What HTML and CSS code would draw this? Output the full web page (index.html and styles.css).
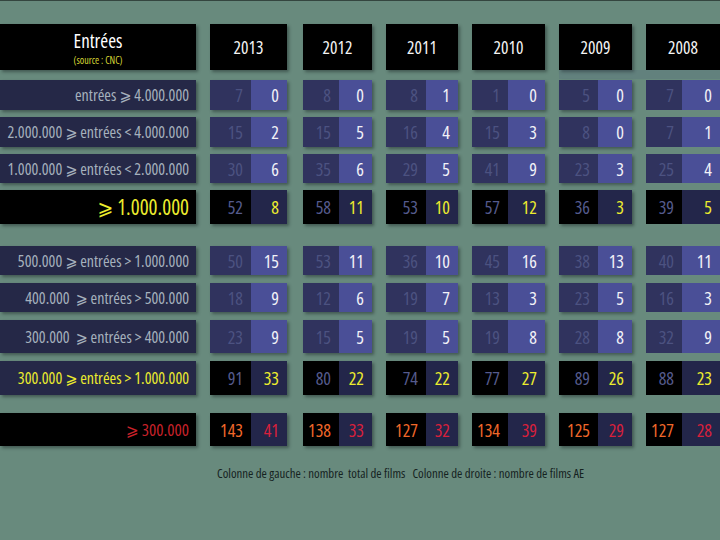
FILE: index.html
```html
<!DOCTYPE html>
<html lang="fr">
<head>
<meta charset="utf-8">
<title>Entrées</title>
<link rel="stylesheet" href="styles.css">
</head>
<body>
<div class="table">
  <div class="row head">
    <div class="label hlabel"><div class="ht">Entrées</div><div class="src">(source : CNC)</div></div>
    <div class="year y13">2013</div>
    <div class="year y12">2012</div>
    <div class="year y11">2011</div>
    <div class="year y10">2010</div>
    <div class="year y09">2009</div>
    <div class="year y08">2008</div>
  </div>

  <div class="row r1 norm">
    <div class="label">entrées ⩾ 4.000.000</div>
    <div class="cell y13"><span class="l">7</span><span class="r">0</span></div>
    <div class="cell y12"><span class="l">8</span><span class="r">0</span></div>
    <div class="cell y11"><span class="l">8</span><span class="r">1</span></div>
    <div class="cell y10"><span class="l">1</span><span class="r">0</span></div>
    <div class="cell y09"><span class="l">5</span><span class="r">0</span></div>
    <div class="cell y08"><span class="l">7</span><span class="r">0</span></div>
  </div>

  <div class="row r2 norm">
    <div class="label">2.000.000 ⩾ entrées &lt; 4.000.000</div>
    <div class="cell y13"><span class="l">15</span><span class="r">2</span></div>
    <div class="cell y12"><span class="l">15</span><span class="r">5</span></div>
    <div class="cell y11"><span class="l">16</span><span class="r">4</span></div>
    <div class="cell y10"><span class="l">15</span><span class="r">3</span></div>
    <div class="cell y09"><span class="l">8</span><span class="r">0</span></div>
    <div class="cell y08"><span class="l">7</span><span class="r">1</span></div>
  </div>

  <div class="row r3 norm">
    <div class="label">1.000.000 ⩾ entrées &lt; 2.000.000</div>
    <div class="cell y13"><span class="l">30</span><span class="r">6</span></div>
    <div class="cell y12"><span class="l">35</span><span class="r">6</span></div>
    <div class="cell y11"><span class="l">29</span><span class="r">5</span></div>
    <div class="cell y10"><span class="l">41</span><span class="r">9</span></div>
    <div class="cell y09"><span class="l">23</span><span class="r">3</span></div>
    <div class="cell y08"><span class="l">25</span><span class="r">4</span></div>
  </div>

  <div class="row r4 sum big">
    <div class="label">⩾ 1.000.000</div>
    <div class="cell y13"><span class="l">52</span><span class="r">8</span></div>
    <div class="cell y12"><span class="l">58</span><span class="r">11</span></div>
    <div class="cell y11"><span class="l">53</span><span class="r">10</span></div>
    <div class="cell y10"><span class="l">57</span><span class="r">12</span></div>
    <div class="cell y09"><span class="l">36</span><span class="r">3</span></div>
    <div class="cell y08"><span class="l">39</span><span class="r">5</span></div>
  </div>

  <div class="row r5 norm">
    <div class="label">500.000 ⩾ entrées &gt; 1.000.000</div>
    <div class="cell y13"><span class="l">50</span><span class="r">15</span></div>
    <div class="cell y12"><span class="l">53</span><span class="r">11</span></div>
    <div class="cell y11"><span class="l">36</span><span class="r">10</span></div>
    <div class="cell y10"><span class="l">45</span><span class="r">16</span></div>
    <div class="cell y09"><span class="l">38</span><span class="r">13</span></div>
    <div class="cell y08"><span class="l">40</span><span class="r">11</span></div>
  </div>

  <div class="row r6 norm">
    <div class="label">400.000 &nbsp;⩾ entrées &gt; 500.000</div>
    <div class="cell y13"><span class="l">18</span><span class="r">9</span></div>
    <div class="cell y12"><span class="l">12</span><span class="r">6</span></div>
    <div class="cell y11"><span class="l">19</span><span class="r">7</span></div>
    <div class="cell y10"><span class="l">13</span><span class="r">3</span></div>
    <div class="cell y09"><span class="l">23</span><span class="r">5</span></div>
    <div class="cell y08"><span class="l">16</span><span class="r">3</span></div>
  </div>

  <div class="row r7 norm">
    <div class="label">300.000 &nbsp;⩾ entrées &gt; 400.000</div>
    <div class="cell y13"><span class="l">23</span><span class="r">9</span></div>
    <div class="cell y12"><span class="l">15</span><span class="r">5</span></div>
    <div class="cell y11"><span class="l">19</span><span class="r">5</span></div>
    <div class="cell y10"><span class="l">19</span><span class="r">8</span></div>
    <div class="cell y09"><span class="l">28</span><span class="r">8</span></div>
    <div class="cell y08"><span class="l">32</span><span class="r">9</span></div>
  </div>

  <div class="row r8 sum">
    <div class="label">300.000 ⩾ entrées &gt; 1.000.000</div>
    <div class="cell y13"><span class="l">91</span><span class="r">33</span></div>
    <div class="cell y12"><span class="l">80</span><span class="r">22</span></div>
    <div class="cell y11"><span class="l">74</span><span class="r">22</span></div>
    <div class="cell y10"><span class="l">77</span><span class="r">27</span></div>
    <div class="cell y09"><span class="l">89</span><span class="r">26</span></div>
    <div class="cell y08"><span class="l">88</span><span class="r">23</span></div>
  </div>

  <div class="row r9 total">
    <div class="label">⩾ 300.000</div>
    <div class="cell y13"><span class="l">143</span><span class="r">41</span></div>
    <div class="cell y12"><span class="l">138</span><span class="r">33</span></div>
    <div class="cell y11"><span class="l">127</span><span class="r">32</span></div>
    <div class="cell y10"><span class="l">134</span><span class="r">39</span></div>
    <div class="cell y09"><span class="l">125</span><span class="r">29</span></div>
    <div class="cell y08"><span class="l">127</span><span class="r">28</span></div>
  </div>

  <p class="note">Colonne de gauche : nombre &nbsp;total de films &nbsp; Colonne de droite : nombre de films AE</p>
</div>
</body>
</html>
```

FILE: styles.css
```css
html, body {
  margin: 0;
  padding: 0;
}
body {
  width: 720px;
  height: 540px;
  overflow: hidden;
  background: #688a7d;
  border-top: 1px solid #34453f;
  box-sizing: border-box;
  font-family: "Open Sans", "DejaVu Sans", sans-serif;
  font-stretch: 75%;
  font-weight: 380;
}
.table {
  display: flex;
  flex-direction: column;
  padding-top: 23px;
}
.row {
  display: grid;
  grid-template-columns: 196px 77px 71px 72px 73px 73px 74px;
  column-gap: 14px;
  margin-bottom: 7px;
}
.row > * {
  box-shadow: 2px 2px 3px rgba(20, 30, 30, 0.45);
}
.row > .y12 { margin-left: 2px; }
.row > .y08 { box-shadow: none; }

.head { height: 46px; margin-bottom: 10px; }
.r1 { height: 30px; }
.r2 { height: 30px; }
.r3 { height: 29px; }
.r4 { height: 34px; margin-bottom: 22px; }
.r5 { height: 29px; margin-bottom: 8px; }
.r6 { height: 29px; margin-bottom: 8px; }
.r7 { height: 33px; margin-bottom: 8px; }
.r8 { height: 34px; margin-bottom: 18px; }
.r9 { height: 33px; }

.label {
  background: #252847;
  color: #a5b1bd;
  font-size: 16px;
  display: flex;
  align-items: center;
  justify-content: flex-end;
  padding-right: 7px;
  white-space: nowrap;
}
.hlabel {
  background: #000;
  flex-direction: column;
  justify-content: center;
  align-items: center;
  padding: 3px 0 0 0;
  box-sizing: border-box;
}
.ht { color: #fff; font-size: 19px; line-height: 20px; }
.src { color: #d6d634; font-size: 10px; line-height: 12px; margin-top: 3px; }

.year {
  background: #000;
  color: #f4f4f4;
  font-size: 17.5px;
  display: flex;
  align-items: center;
  justify-content: center;
  position: relative;
}
.head .y09::after {
  content: "";
  position: absolute;
  left: 0;
  top: 100%;
  width: 161px;
  height: 9px;
  background: rgba(70, 90, 130, 0.18);
}

.cell {
  display: grid;
  font-size: 18px;
}
.y13.cell { grid-template-columns: 41px 36px; }
.y12.cell { grid-template-columns: 36px 33px; }
.y11.cell { grid-template-columns: 40px 32px; }
.y10.cell { grid-template-columns: 36px 37px; }
.y09.cell { grid-template-columns: 39px 34px; }
.y08.cell { grid-template-columns: 36px 38px; }
.cell span {
  display: flex;
  align-items: center;
  justify-content: flex-end;
  padding-right: 8px;
}
.norm .cell .l { background: #30335e; color: #4c5281; }
.norm .cell .r { background: #4a4f97; color: #f2f2f8; }

.sum .cell .l { background: #000; color: #555b8d; }
.sum .cell .r { background: #23264a; color: #ecec2e; }
.sum .label { color: #ecec2e; }
.big .label { background: #000; font-size: 21px; }

.total .label { background: #000; color: #c8222a; font-size: 17px; }
.total .cell .l { background: #000; color: #f0682a; }
.total .cell .r { background: #23264a; color: #d8203c; }

.note {
  margin: 11px 0 0 217px;
  font-size: 12.8px;
  color: #15221f;
  white-space: nowrap;
}
```
